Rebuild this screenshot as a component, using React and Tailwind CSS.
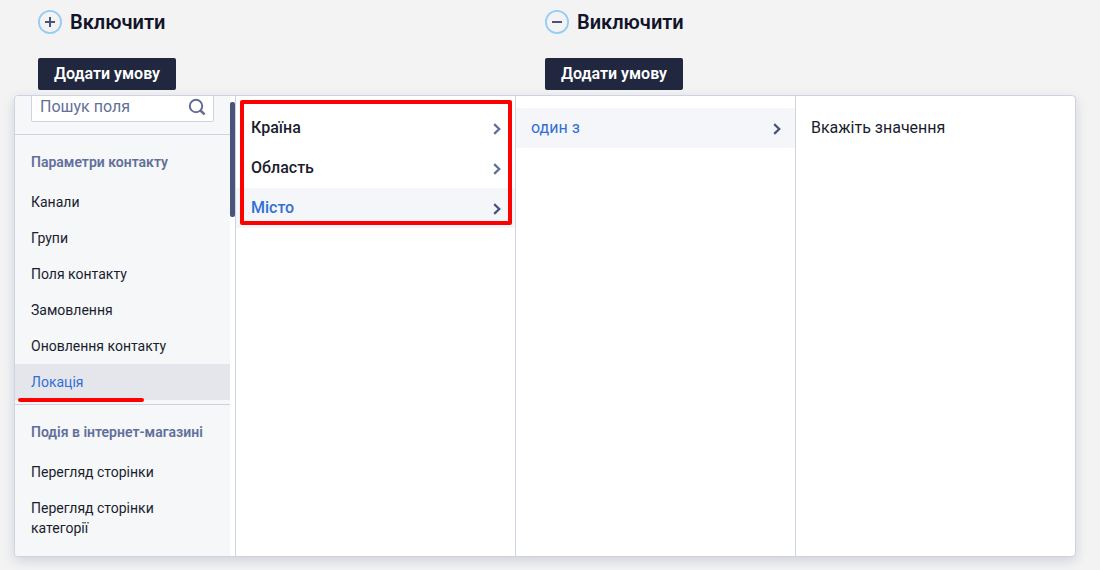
import { useState } from "react";

const groups = [
  {
    title: "Параметри контакту",
    items: ["Канали", "Групи", "Поля контакту", "Замовлення", "Оновлення контакту", "Локація"],
  },
  {
    title: "Подія в інтернет-магазині",
    items: ["Перегляд сторінки", "Перегляд сторінки категорії"],
  },
];

const locationFields = ["Країна", "Область", "Місто"];

function CircleIcon({ plus }) {
  return (
    <svg className="size-6 shrink-0" viewBox="0 0 24 24" fill="none" aria-hidden="true">
      <circle cx="12" cy="12" r="11.1" stroke="#93cdf6" strokeWidth="1.8" />
      <path d="M7 12h10" stroke="#48547a" strokeWidth="2" />
      {plus && <path d="M12 7v10" stroke="#48547a" strokeWidth="2" />}
    </svg>
  );
}

function Chevron({ active }) {
  return (
    <svg
      className={active ? "size-4 shrink-0 text-[#48547a]" : "size-4 shrink-0 text-[#626f99]"}
      viewBox="0 0 16 16"
      fill="none"
      aria-hidden="true"
    >
      <path d="M5.2 4.2 10.2 9 5.2 13.8" stroke="currentColor" strokeWidth="2.3" />
    </svg>
  );
}

function ConditionGroup({ title, plus }) {
  return (
    <section>
      <h2 className="flex items-center gap-2 text-xl leading-6 font-semibold text-[#11142a]">
        <CircleIcon plus={plus} />
        {title}
      </h2>
      <button className="mt-6 h-8 rounded-xs bg-[#20273f] px-4 text-base font-semibold text-white">
        Додати умову
      </button>
    </section>
  );
}

function Option({ label, active, bold, onClick }) {
  return (
    <button
      onClick={onClick}
      className={`flex h-10 w-full items-center justify-between pr-[10px] pl-[15px] text-left text-base ${
        bold ? "font-medium" : ""
      } ${active ? "bg-[#f5f6f9] text-[#316fd2]" : "text-[#1a1d2e]"}`}
    >
      {label}
      <Chevron active={active} />
    </button>
  );
}

export default function App() {
  const [section, setSection] = useState("Локація");
  const [field, setField] = useState("Місто");

  return (
    <div className="min-h-screen bg-[#f3f3f3] pt-[10px] font-['Roboto',sans-serif] text-[#1a1d2e]">
      <header className="grid grid-cols-2 pr-12 pl-[38px]">
        <ConditionGroup title="Включити" plus />
        <ConditionGroup title="Виключити" />
      </header>

      {/* Field picker */}
      <main className="mt-[5px] mr-6 ml-[14px] flex rounded-sm border border-[#cfd2e0] bg-white shadow-[0_4px_12px_rgba(72,84,122,0.2)]">
        <div className="flex w-[220px] shrink-0">
          <nav className="min-w-0 flex-1 rounded-l-sm bg-[#f5f7f9] pb-[6px]">
            <div className="relative mr-4 mb-3 ml-4">
              <input
                type="text"
                aria-label="Пошук поля"
                placeholder="Пошук поля"
                className="block h-[26px] w-full rounded-b-xs border border-t-0 border-[#cfd2e0] bg-white pr-8 pb-1 pl-2 text-base outline-none placeholder:text-[#626f99]"
              />
              <svg
                className="absolute top-[2px] right-2 size-[18px] text-[#626f99]"
                viewBox="0 0 18 18"
                fill="none"
                aria-hidden="true"
              >
                <circle cx="8" cy="8" r="6.2" stroke="currentColor" strokeWidth="2" />
                <path d="m12.2 12.2 4.4 4.2" stroke="currentColor" strokeWidth="2.6" />
              </svg>
            </div>

            {groups.map((group) => (
              <section key={group.title} className="border-t border-[#cfd2e0] pb-1">
                <h3 className="px-4 pt-[17px] pb-3 text-sm leading-5 font-semibold whitespace-nowrap text-[#626f99]">
                  {group.title}
                </h3>
                {group.items.map((item) => (
                  <button
                    key={item}
                    onClick={() => setSection(item)}
                    className={`relative block w-full py-2 pr-10 pl-4 text-left text-sm leading-5 ${
                      section === item ? "bg-[#e5e6ec] text-[#316fd2]" : ""
                    }`}
                  >
                    {item}
                    {item === "Локація" && (
                      <span className="absolute -bottom-[2px] left-[3px] h-1 w-[126px] rounded-full bg-[#fe0000]" />
                    )}
                  </button>
                ))}
              </section>
            ))}
          </nav>
          <div className="w-[5px] pt-[6px]">
            <div className="h-[115px] rounded-xs bg-[#48547a]" />
          </div>
        </div>

        <div className="relative flex-1 border-l border-[#cfd2e0] py-3">
          {locationFields.map((name) => (
            <Option
              key={name}
              label={name}
              bold
              active={field === name}
              onClick={() => setField(name)}
            />
          ))}
          <div className="pointer-events-none absolute top-1 right-[3px] left-1 h-[125px] rounded-xs border-4 border-[#fe0000]" />
        </div>

        <div className="flex-1 border-l border-[#cfd2e0] py-3">
          <Option label="один з" active />
        </div>

        <div className="flex-1 border-l border-[#cfd2e0] py-3">
          <p className="px-[15px] text-base leading-10">Вкажіть значення</p>
        </div>
      </main>
    </div>
  );
}
